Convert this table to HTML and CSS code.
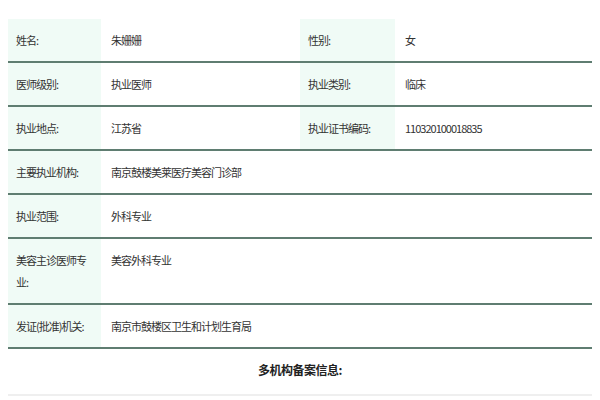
FILE: index.html
```html
<!DOCTYPE html>
<html lang="zh-CN">
<head>
<meta charset="utf-8">
<link rel="stylesheet" href="styles.css">
</head>
<body>
<div class="page">
  <table class="info">
    <colgroup>
      <col class="c-label1">
      <col class="c-value1">
      <col class="c-label2">
      <col class="c-value2">
    </colgroup>
    <tr>
      <th>姓名:</th><td>朱姗姗</td>
      <th>性别:</th><td>女</td>
    </tr>
    <tr>
      <th>医师级别:</th><td>执业医师</td>
      <th>执业类别:</th><td>临床</td>
    </tr>
    <tr>
      <th>执业地点:</th><td>江苏省</td>
      <th>执业证书编码:</th><td>110320100018835</td>
    </tr>
    <tr>
      <th>主要执业机构:</th><td colspan="3">南京鼓楼美莱医疗美容门诊部</td>
    </tr>
    <tr>
      <th>执业范围:</th><td colspan="3">外科专业</td>
    </tr>
    <tr>
      <th>美容主诊医师专业:</th><td colspan="3">美容外科专业</td>
    </tr>
    <tr>
      <th>发证(批准)机关:</th><td colspan="3">南京市鼓楼区卫生和计划生育局</td>
    </tr>
  </table>
  <div class="section-title">多机构备案信息:</div>
  <div class="next-rule"></div>
</div>
</body>
</html>
```

FILE: styles.css
```css
html, body {
  margin: 0;
  padding: 0;
  background: #ffffff;
}
body {
  font-family: "Noto Sans CJK SC", "Noto Sans", sans-serif;
  font-size: 11px;
  letter-spacing: -1px;
  color: #333333;
}
.page {
  padding: 19px 8px 0 8px;
}
.info {
  width: 100%;
  border-collapse: collapse;
  table-layout: fixed;
}
.c-label1 { width: 93px; }
.c-value1 { width: 199px; }
.c-label2 { width: 95px; }
.c-value2 { width: auto; }
.info th,
.info td {
  text-align: left;
  font-weight: normal;
  vertical-align: top;
  line-height: 22px;
  padding: 10px 0 10px 10px;
  border-bottom: 2px solid #5f7d71;
}
.info th {
  background: #f0fbf6;
  padding-left: 8px;
  padding-right: 8px;
}
.section-title {
  text-align: center;
  font-weight: bold;
  font-size: 12px;
  letter-spacing: -0.5px;
  line-height: 22px;
  padding: 10px 0 13px 0;
  color: #222222;
}
.next-rule {
  border-top: 2px solid #efefef;
}
```
